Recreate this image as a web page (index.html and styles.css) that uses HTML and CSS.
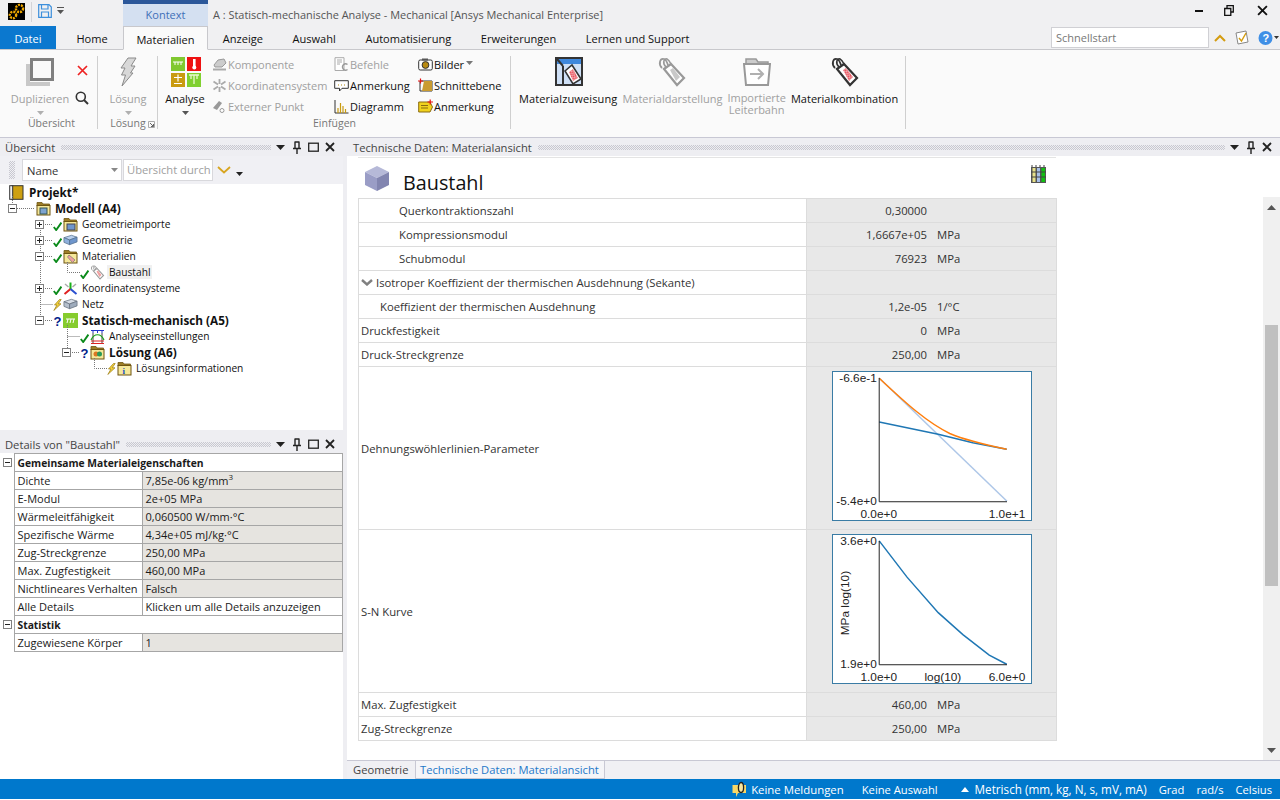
FILE: index.html
```html
<!DOCTYPE html>
<html lang="de">
<head>
<meta charset="utf-8">
<title>A : Statisch-mechanische Analyse - Mechanical</title>
<link rel="stylesheet" href="styles.css">
</head>
<body>
<svg class="defs" width="0" height="0" aria-hidden="true">
  <defs>
    <pattern id="chk" width="3" height="3" patternUnits="userSpaceOnUse" patternTransform="rotate(35)"><rect width="3" height="3" fill="#f4c0c4"/><rect width="1.5" height="1.5" fill="#e8404c"/><rect x="1.5" y="1.5" width="1.5" height="1.5" fill="#e8404c"/></pattern>
    <symbol id="check" viewBox="0 0 9 10"><path d="M0.8 6 L3.2 9 L8.4 1.6" fill="none" stroke="#0a8a1a" stroke-width="1.9"/></symbol>
    <symbol id="bolt" viewBox="0 0 9 12"><path d="M6.5 0.5 L1.5 6 L4 6 L0.8 11.5 L8 4.8 L5.2 4.8 L8.2 0.5Z" fill="#f3d23c" stroke="#9a7a10" stroke-width=".7"/></symbol>
    <symbol id="quest" viewBox="0 0 9 13"><text x="0.5" y="12" class="q">?</text></symbol>
    <symbol id="folder" viewBox="0 0 15 15"><path d="M1 3.5 V1.5 H6 L7 3 H13.5 V5 H1Z" fill="#9d7d27" stroke="#6f5510" stroke-width=".8"/><rect x="1" y="4.5" width="13" height="9.5" fill="#f6e89a" stroke="#6f5510"/></symbol>
    <symbol id="cube" viewBox="0 0 16 12"><path d="M1 3.5 L9 1 L15 3 L7 6Z" fill="#b9d0ee" stroke="#56708e" stroke-width=".8"/><path d="M1 3.5 L7 6 V11 L1 8.5Z" fill="#8fb1dc" stroke="#56708e" stroke-width=".8"/><path d="M7 6 L15 3 V8 L7 11Z" fill="#6f96cc" stroke="#56708e" stroke-width=".8"/></symbol>
    <symbol id="cubegray" viewBox="0 0 16 12"><path d="M1 3.5 L9 1 L15 3 L7 6Z" fill="#d7dde6" stroke="#66707e" stroke-width=".8"/><path d="M1 3.5 L7 6 V11 L1 8.5Z" fill="#b5bfcc" stroke="#66707e" stroke-width=".8"/><path d="M7 6 L15 3 V8 L7 11Z" fill="#9eabbc" stroke="#66707e" stroke-width=".8"/></symbol>
    <symbol id="tag" viewBox="0 0 30 30"><path d="M5 11 C1 7 3 1 7 2 C9 2.500 10 5 11 8" fill="none" stroke="currentColor" stroke-width="1.8"/><path d="M9 10 C5 6 7 1 10 2 C12 3 13 5 14 7" fill="none" stroke="currentColor" stroke-width="1.6"/><path d="M7 12 L14 7 L27 21 L20 28Z" fill="#fff" stroke="currentColor" stroke-width="2.2"/></symbol>
    <symbol id="tri" viewBox="0 0 9 5"><path d="M0 0 H9 L4.5 5Z" fill="currentColor"/></symbol>
    <symbol id="pin" viewBox="0 0 10 13"><path d="M2.5 1 H7.5 M3 1 V7 M7 1 V7 M1 7.5 H9 M5 8 V13" fill="none" stroke="#222" stroke-width="1.4"/></symbol>
    <symbol id="close" viewBox="0 0 10 10"><path d="M1 1 L9 9 M9 1 L1 9" stroke="#222" stroke-width="1.8"/></symbol>
    <symbol id="maxi" viewBox="0 0 11 10"><rect x=".7" y="1.2" width="9.6" height="8" fill="none" stroke="#222" stroke-width="1.3"/></symbol>
  </defs>
</svg>

<div class="app">
  <header class="titlebar">
    <div class="logo">
      <svg width="17" height="17" viewBox="0 0 17 17"><circle cx="11.5" cy="5.5" r="3.6" fill="none" stroke="#f0a800" stroke-width="2.4" stroke-dasharray="2 1"/><circle cx="5" cy="12" r="3.2" fill="none" stroke="#f0a800" stroke-width="2.4" stroke-dasharray="2 1"/></svg>
    </div>
    <div class="qat">
      <svg width="14" height="14" viewBox="0 0 14 14"><path d="M.7.7 H11 L13.3 3 V13.3 H.7Z M3.5 .7 V5 H10 V.7 M3.5 13.3 V8 H10.5 V13.3" fill="none" stroke="#3d8fdc" stroke-width="1.2"/></svg>
      <svg class="qat-tri" width="7" height="8" viewBox="0 0 7 8"><path d="M0 0 H7 V1 H0Z M0 3 H7 L3.5 7Z" fill="#555"/></svg>
    </div>
    <div class="context-tab">Kontext</div>
    <div class="window-title">A : Statisch-mechanische Analyse - Mechanical [Ansys Mechanical Enterprise]</div>
    <div class="winbtns">
      <svg width="8" height="3" viewBox="0 0 8 3"><rect width="8" height="2" y="1" fill="#111"/></svg>
      <svg class="restore" width="10" height="11" viewBox="0 0 10 11"><path d="M3 3 V.7 H9.3 V7 H7 M.7 3.5 H6.8 V10.3 H.7Z" fill="none" stroke="#111" stroke-width="1.3"/></svg>
      <svg width="11" height="11" viewBox="0 0 10 10"><path d="M1 1 L9 9 M9 1 L1 9" stroke="#111" stroke-width="1.7"/></svg>
    </div>
  </header>

  <nav class="tabbar">
    <div class="tab file">Datei</div>
    <div class="tab home">Home</div>
    <div class="tab active">Materialien</div>
    <div class="tab">Anzeige</div>
    <div class="tab">Auswahl</div>
    <div class="tab">Automatisierung</div>
    <div class="tab">Erweiterungen</div>
    <div class="tab">Lernen und Support</div>
    <div class="quick">
      <div class="quick-input">Schnellstart</div>
      <svg width="12" height="8" viewBox="0 0 12 8"><path d="M1 7 L6 2 L11 7" fill="none" stroke="#d49c10" stroke-width="2"/></svg>
      <svg width="14" height="15" viewBox="0 0 14 15"><path d="M1 3 L11 1 L13 12 L3 14Z" fill="#fff" stroke="#888"/><path d="M4 8 L6.5 11 L11 3" fill="none" stroke="#d49c10" stroke-width="1.4"/></svg>
      <span class="help"><svg width="15" height="16" viewBox="0 0 15 16"><circle cx="7.5" cy="8" r="7" fill="#3f8fe6"/><text x="4.4" y="12.2" class="helpq">?</text></svg><svg class="tri-s" width="5" height="3"><use href="#tri"/></svg></span>
    </div>
  </nav>

  <section class="ribbon">
    <div class="group g-overview">
      <div class="group-body">
        <div class="bigbtn off w64">
          <span class="bigicon"><svg width="30" height="30" viewBox="0 0 30 30"><path d="M1 7 V29 H25 V25 H5 V7Z" fill="#c8c8c8"/><rect x="6.5" y="2.5" width="21" height="20" fill="#fafafa" stroke="#808080" stroke-width="3"/></svg></span>
          <span class="biglabel">Duplizieren</span>
          <svg class="droptri" width="7" height="4"><use href="#tri"/></svg>
        </div>
        <div class="stack-icons">
          <svg width="11" height="11" viewBox="0 0 11 11"><path d="M1 1 L10 10 M10 1 L1 10" stroke="#ee2222" stroke-width="1.7"/></svg>
          <svg width="14" height="14" viewBox="0 0 14 14"><circle cx="5.8" cy="5.8" r="4.5" fill="none" stroke="#333" stroke-width="1.6"/><path d="M9 9 L13 13" stroke="#333" stroke-width="2"/></svg>
        </div>
      </div>
      <div class="group-label">Übersicht</div>
    </div>

    <div class="group g-solve">
      <div class="group-body">
        <div class="bigbtn off full">
          <span class="bigicon"><svg width="19" height="30" viewBox="0 0 19 30"><path d="M9 1 H17 L12 9 L16 9 L11.5 16 L14 16 L3 29 L6.5 18 L2.5 18 L6 11 L2 11Z" fill="#d8d8d8" stroke="#8a8a8a"/></svg></span>
          <span class="biglabel">Lösung</span>
          <svg class="droptri" width="7" height="4"><use href="#tri"/></svg>
        </div>
      </div>
      <div class="group-label">Lösung<svg class="launcher" width="7" height="7" viewBox="0 0 7 7"><path d="M.5 .5 H6.5 V6.5 H.5Z" fill="none" stroke="#aaa"/><path d="M2 2 L5.5 5.5 M5.5 3 V5.5 H3" stroke="#666" fill="none"/></svg></div>
    </div>

    <div class="group g-insert">
      <div class="group-body">
        <div class="bigbtn w54">
          <span class="bigicon tiles">
            <svg width="30" height="30" viewBox="0 0 30 30">
              <rect width="14" height="14" fill="#80c830"/><path d="M2 5 H12 M4 5 V8 M7 5 V8 M10 5 V8" stroke="#fff"/>
              <rect x="16" width="14" height="14" fill="#ee1111"/><rect x="22" y="2" width="2.6" height="8" fill="#fff"/><circle cx="23.3" cy="10.500" r="2" fill="#fff"/>
              <rect y="16" width="14" height="14" fill="#c99b10"/><path d="M3 21 H11 M7 18 V25 M3 27 H11" stroke="#fff" stroke-width="1.2" transform="translate(0 -.5)"/>
              <rect x="16" y="16" width="14" height="14" fill="#80d030"/><path d="M18 18 H28 M23 18 V27 M20 18 V22 M26 18 V22" stroke="#eaf7d0" stroke-width="1.3"/>
            </svg>
          </span>
          <span class="biglabel">Analyse</span>
          <svg class="droptri dark" width="7" height="4"><use href="#tri"/></svg>
        </div>
        <div class="smallcol c1">
          <div class="small off"><svg width="15" height="15" viewBox="0 0 15 15"><path d="M2 8 L6 3 L12 2 L14 6 L10 10 H3Z" fill="#ccc" stroke="#999"/><path d="M1 12.5 H14" stroke="#aaa" stroke-width="2"/></svg>Komponente</div>
          <div class="small off"><svg width="15" height="15" viewBox="0 0 15 15"><path d="M7.5 1 V6 M7.5 9 V14 M1.5 3.5 L6 6.500 M9 8.5 L13.5 11.5 M13.5 3.5 L9 6.5 M6 8.5 L1.5 11.5" stroke="#aaa" stroke-width="1.8"/></svg>Koordinatensystem</div>
          <div class="small off"><svg width="15" height="15" viewBox="0 0 15 15"><path d="M1 9 L7 2 L10 4 L5 11Z" fill="#999"/><circle cx="10" cy="11.5" r="2" fill="#fff" stroke="#999"/></svg>Externer Punkt</div>
        </div>
        <div class="smallcol c2">
          <div class="small off"><svg width="15" height="15" viewBox="0 0 15 15"><path d="M1 .7 H10 V13.5 H1Z" fill="#fff" stroke="#aaa"/><path d="M3 3 H8 M3 5 H8 M3 7 H6" stroke="#aaa"/><path d="M13.5 7.5 A3 3.2 0 1 0 13.5 12.5" fill="none" stroke="#999" stroke-width="1.4"/></svg>Befehle</div>
          <div class="small"><svg width="15" height="15" viewBox="0 0 15 15"><path d="M.7 2.7 H14.3 V10.3 H8 L5.5 13 V10.3 H.7Z" fill="#fff" stroke="#333"/><path d="M4 7 H5 M7 7 H8 M10 7 H11" stroke="#b08a10"/></svg>Anmerkung</div>
          <div class="small"><svg width="15" height="15" viewBox="0 0 15 15"><path d="M1 1 V14 H14.5" fill="none" stroke="#333"/><path d="M4 14 V9 M6.5 14 V4 M9 14 V7 M11.5 14 V10" stroke="#c99b10" stroke-width="1.2"/></svg>Diagramm</div>
        </div>
        <div class="smallcol c3">
          <div class="small"><svg width="15" height="15" viewBox="0 0 15 15"><rect x=".7" y="3" width="13.6" height="10" rx="1.5" fill="#fff" stroke="#333"/><rect x="4" y="1.5" width="6" height="2" fill="#555"/><circle cx="7.5" cy="8" r="3.4" fill="#b88a10" stroke="#333"/></svg>Bilder<svg class="tri-i" width="7" height="4"><use href="#tri"/></svg></div>
          <div class="small"><svg width="15" height="15" viewBox="0 0 15 15"><path d="M2 3 H14 V13 H2Z" fill="none" stroke="#333"/><path d="M6 3 H14 V13 H4Z" fill="#c99b30"/><path d="M0 3 H5 M2.5 .5 V5.5" stroke="#e81010" stroke-width="1.2"/></svg>Schnittebene</div>
          <div class="small"><svg width="15" height="15" viewBox="0 0 15 15"><path d="M.7 3 H12 L14.5 8 L12 13 H.7Z" fill="#f1d21d" stroke="#8a6c10"/><path d="M3 6.5 H10 M3 9 H10" stroke="#8a6c10"/><path d="M9.5 3 H15 M12.2 .5 V5.5" stroke="#e81010" stroke-width="1.2"/></svg>Anmerkung</div>
        </div>
      </div>
      <div class="group-label">Einfügen</div>
    </div>

    <div class="group g-material">
      <div class="group-body">
        <div class="bigbtn first">
          <span class="bigicon"><svg width="28" height="29" viewBox="0 0 28 29"><path d="M1 1 H27 V28 H1Z" fill="#cfe0f6" stroke="#333" stroke-width="2"/><path d="M2 2 H26 V7 H2Z" fill="#3f88dc"/><path d="M8 9 V28 M8 9 L2 2" stroke="#333" stroke-width="2"/><path d="M10 14 L17 8 L26 22 L18 27Z" fill="#fff" stroke="#333" stroke-width="1.6"/><path d="M14 15 L18 12 L23 21 L18 24Z" fill="url(#chk)"/></svg></span>
          <span class="biglabel">Materialzuweisung</span>
        </div>
        <div class="bigbtn off">
          <span class="bigicon gray"><svg width="30" height="30" viewBox="0 0 30 30"><use href="#tag"/><path d="M13 13 L16 11 L23 20 L19 24Z" fill="#c8c8c8"/></svg></span>
          <span class="biglabel">Materialdarstellung</span>
        </div>
        <div class="bigbtn off">
          <span class="bigicon"><svg width="28" height="29" viewBox="0 0 28 29"><path d="M3 7 V2 H13 L15 5 H25 V7" fill="#ccc" stroke="#999" stroke-width="1.5"/><path d="M1 7 H27 L25 28 H3Z" fill="#fff" stroke="#999" stroke-width="2"/><path d="M7 17 H19 M15 12 L20 17 L15 22" fill="none" stroke="#b0b0b0" stroke-width="2"/></svg></span>
          <span class="biglabel two">Importierte<br>Leiterbahn</span>
        </div>
        <div class="bigbtn">
          <span class="bigicon dark"><svg width="30" height="30" viewBox="0 0 30 30"><use href="#tag"/><path d="M13 13 L16 11 L23 20 L19 24Z" fill="url(#chk)"/></svg></span>
          <span class="biglabel">Materialkombination</span>
        </div>
      </div>
    </div>
  </section>

  <main class="workspace">
    <aside class="left">
      <section class="pane-tree">
        <div class="panehead">
          <span class="panetitle">Übersicht</span>
          <span class="grip"></span>
          <span class="paneicons">
            <svg class="i-tri" width="9" height="5"><use href="#tri"/></svg>
            <svg width="10" height="13"><use href="#pin"/></svg>
            <svg width="11" height="10"><use href="#maxi"/></svg>
            <svg width="10" height="10"><use href="#close"/></svg>
          </span>
        </div>
        <div class="treetools">
          <span class="vgrip"></span>
          <div class="select">Name<svg width="7" height="4"><use href="#tri"/></svg></div>
          <div class="search">Übersicht durch</div>
          <svg class="chev" width="14" height="8" viewBox="0 0 14 8"><path d="M1 1 L7 6.5 L13 1" fill="none" stroke="#d8a520" stroke-width="1.8"/></svg>
          <svg class="chev2" width="7" height="4"><use href="#tri"/></svg>
        </div>
        <div class="tree">
          <svg class="connectors" width="343" height="200" viewBox="0 0 343 200">
            <path d="M12.5 12 V20 M17 24.5 H34 M40.5 44 V136 M45 40.5 H53 M45 56.5 H53 M45 72.5 H53 M45 104.5 H53 M40.5 120.5 H53 M45 136.5 H53 M67.5 78 V88.5 H80 M67.5 141 V164 M67.5 152.5 H80 M72 168.5 H80 M94.5 174 V184.5 H107" fill="none" stroke="#777" stroke-dasharray="1 1"/>
          </svg>
          <div class="node root"><svg class="icon" width="15" height="15" viewBox="0 0 15 15"><rect x="3" y=".7" width="11" height="13.6" fill="#cda012" stroke="#333"/><rect x=".7" y=".7" width="3" height="13.6" fill="#eee" stroke="#333"/></svg><b>Projekt*</b></div>
          <div class="node l1"><i class="box minus"></i><i class="st"></i><svg class="icon" width="15" height="15" viewBox="0 0 15 15"><use href="#folder"/><rect x="4" y="7" width="7" height="6" fill="#7da3cf" stroke="#355"/></svg><b>Modell (A4)</b></div>
          <div class="node l2"><i class="box plus"></i><i class="st"><svg width="9" height="10"><use href="#check"/></svg></i><svg class="icon" width="15" height="15" viewBox="0 0 15 15"><use href="#folder"/><rect x="4" y="7" width="8" height="6" fill="#6f96cc" stroke="#445"/></svg><span>Geometrieimporte</span></div>
          <div class="node l2"><i class="box plus"></i><i class="st"><svg width="9" height="10"><use href="#check"/></svg></i><svg class="icon" width="15" height="12"><use href="#cube"/></svg><span>Geometrie</span></div>
          <div class="node l2"><i class="box minus"></i><i class="st"><svg width="9" height="10"><use href="#check"/></svg></i><svg class="icon" width="15" height="15" viewBox="0 0 15 15"><use href="#folder"/><path d="M6 6 L12 11 L9.5 13.5 L4.5 8Z" fill="#f0a0a0" stroke="#777" stroke-width=".7"/></svg><span>Materialien</span></div>
          <div class="node l3"><i class="box none"></i><i class="st"><svg width="9" height="10"><use href="#check"/></svg></i><svg class="icon gray" width="15" height="15" viewBox="0 0 30 30"><use href="#tag"/><path d="M13 13 L16 11 L23 20 L19 24Z" fill="#f0a0a0"/></svg><span class="selected">Baustahl</span></div>
          <div class="node l2"><i class="box plus"></i><i class="st"><svg width="9" height="10"><use href="#check"/></svg></i><svg class="icon" width="15" height="15" viewBox="0 0 15 15"><path d="M7.5 8 V1.5" stroke="#18b018" stroke-width="2"/><path d="M7.5 8 L1.5 13" stroke="#e02020" stroke-width="2"/><path d="M7.5 8 L13.5 13" stroke="#2a50d0" stroke-width="2"/><path d="M2 3 L5.5 6 M13 3 L9.5 6" stroke="#aaa" stroke-width="1.5"/></svg><span>Koordinatensysteme</span></div>
          <div class="node l2"><i class="box none"></i><i class="st"><svg width="9" height="12"><use href="#bolt"/></svg></i><svg class="icon" width="15" height="12"><use href="#cubegray"/></svg><span>Netz</span></div>
          <div class="node l2"><i class="box minus"></i><i class="st"><svg width="9" height="13"><use href="#quest"/></svg></i><svg class="icon" width="15" height="15" viewBox="0 0 15 15"><rect width="15" height="15" fill="#86cc2e"/><path d="M3 6 H12 M5 6 L4 10 M8 6 L7 10 M11 6 L10 10" stroke="#fff"/></svg><b>Statisch-mechanisch (A5)</b></div>
          <div class="node l3"><i class="box none"></i><i class="st"><svg width="9" height="10"><use href="#check"/></svg></i><svg class="icon" width="15" height="15" viewBox="0 0 15 15"><path d="M1 1.5 H14 M3 1 V4 M7.5 1 V4 M12 1 V4" stroke="#2233cc"/><path d="M3 4 V14 M12 4 V14" stroke="#444"/><path d="M1 12 H14 M1 14.5 H14" stroke="#dd2222"/><path d="M1 11 C4 4 11 4 14 11" fill="none" stroke="#14a014" stroke-width="1.2"/></svg><span>Analyseeinstellungen</span></div>
          <div class="node l3 kid"><i class="box minus"></i><i class="st"><svg width="9" height="13"><use href="#quest"/></svg></i><svg class="icon" width="15" height="15" viewBox="0 0 15 15"><use href="#folder"/><circle cx="6" cy="9" r="2.5" fill="#dd7722"/><circle cx="9.5" cy="9" r="2.5" fill="#2a9a5a"/></svg><b>Lösung (A6)</b></div>
          <div class="node l4"><i class="box none"></i><i class="st"><svg width="9" height="12"><use href="#bolt"/></svg></i><svg class="icon" width="15" height="15" viewBox="0 0 15 15"><use href="#folder"/><text x="5.5" y="12.5" class="info">i</text></svg><span>Lösungsinformationen</span></div>
        </div>
      </section>

      <section class="pane-details">
        <div class="panehead">
          <span class="panetitle">Details von "Baustahl"</span>
          <span class="grip"></span>
          <span class="paneicons">
            <svg class="i-tri" width="9" height="5"><use href="#tri"/></svg>
            <svg width="10" height="13"><use href="#pin"/></svg>
            <svg width="11" height="10"><use href="#maxi"/></svg>
            <svg width="10" height="10"><use href="#close"/></svg>
          </span>
        </div>
        <table class="details">
          <colgroup><col class="c-exp"><col class="c-name"><col class="c-val"></colgroup>
          <tr class="cat"><td class="exp"><i class="box minus"></i></td><td colspan="2">Gemeinsame Materialeigenschaften</td></tr>
          <tr><td class="exp"></td><td>Dichte</td><td class="v">7,85e-06 kg/mm<sup>3</sup></td></tr>
          <tr><td class="exp"></td><td>E-Modul</td><td class="v">2e+05 MPa</td></tr>
          <tr><td class="exp"></td><td>Wärmeleitfähigkeit</td><td class="v">0,060500 W/mm·°C</td></tr>
          <tr><td class="exp"></td><td>Spezifische Wärme</td><td class="v">4,34e+05 mJ/kg·°C</td></tr>
          <tr><td class="exp"></td><td>Zug-Streckgrenze</td><td class="v">250,00 MPa</td></tr>
          <tr><td class="exp"></td><td>Max. Zugfestigkeit</td><td class="v">460,00 MPa</td></tr>
          <tr><td class="exp"></td><td>Nichtlineares Verhalten</td><td class="v">Falsch</td></tr>
          <tr><td class="exp"></td><td>Alle Details</td><td>Klicken um alle Details anzuzeigen</td></tr>
          <tr class="cat"><td class="exp"><i class="box minus"></i></td><td colspan="2">Statistik</td></tr>
          <tr><td class="exp"></td><td>Zugewiesene Körper</td><td class="v">1</td></tr>
        </table>
      </section>
    </aside>

    <section class="right">
      <div class="panehead">
        <span class="panetitle">Technische Daten: Materialansicht</span>
        <span class="grip"></span>
        <span class="paneicons gapped">
          <svg class="i-tri" width="9" height="5"><use href="#tri"/></svg>
          <svg width="10" height="13"><use href="#pin"/></svg>
          <svg width="10" height="10"><use href="#close"/></svg>
        </span>
      </div>
      <div class="viewer">
        <div class="content">
          <div class="mat-head">
            <svg class="mat-cube" width="26" height="27" viewBox="0 0 26 27"><path d="M13 1 L25 7 L13 13 L1 7Z" fill="#b6b9d8"/><path d="M1 7 L13 13 V26 L1 20Z" fill="#9a9dc6"/><path d="M25 7 L13 13 V26 L25 20Z" fill="#8285b0"/></svg>
            <h1>Baustahl</h1>
            <svg class="mat-book" width="16" height="18" viewBox="0 0 16 18"><rect x="0" y="2" width="15" height="16" fill="#555"/><rect x="1.5" y="3" width="3" height="14" fill="#e8e28a"/><rect x="6" y="3" width="3" height="14" fill="#a8c0e8"/><rect x="10.5" y="3" width="3.5" height="14" fill="#10c010"/><path d="M0 7 H15 M0 12 H15" stroke="#444"/><path d="M1 2 V0 M5 2 V0 M9 2 V0 M13 2 V0" stroke="#777" stroke-width="1.4"/></svg>
          </div>
          <table class="props">
            <colgroup><col class="p-name"><col class="p-val"></colgroup>
            <tr><td class="ind2">Querkontraktionszahl</td><td class="pv"><span class="n">0,30000</span></td></tr>
            <tr><td class="ind2">Kompressionsmodul</td><td class="pv"><span class="n">1,6667e+05</span><span class="u">MPa</span></td></tr>
            <tr><td class="ind2">Schubmodul</td><td class="pv"><span class="n">76923</span><span class="u">MPa</span></td></tr>
            <tr><td class="expand"><svg width="12" height="7" viewBox="0 0 12 7"><path d="M1 1 L6 5.5 L11 1" fill="none" stroke="#808080" stroke-width="2.4"/></svg>Isotroper Koeffizient der thermischen Ausdehnung (Sekante)</td><td class="pv"></td></tr>
            <tr><td class="ind1">Koeffizient der thermischen Ausdehnung</td><td class="pv"><span class="n">1,2e-05</span><span class="u">1/°C</span></td></tr>
            <tr><td>Druckfestigkeit</td><td class="pv"><span class="n">0</span><span class="u">MPa</span></td></tr>
            <tr><td>Druck-Streckgrenze</td><td class="pv"><span class="n">250,00</span><span class="u">MPa</span></td></tr>
            <tr class="chart-row"><td>Dehnungswöhlerlinien-Parameter</td><td class="pv chart-cell">
              <svg class="chart" width="200" height="150" viewBox="0 0 200 150">
                <path d="M46.5 6 L176 131" class="c-light"/>
                <path d="M46.5 50.7 L106.3 63 L141.3 71.7 L175.7 78.3" class="c-blue"/>
                <path d="M46.5 6.3 C75 33 95 51 118 62.3 C135 69.500 155 74 175.7 78.3" class="c-orange"/>
                <path d="M46.5 6 V131.5 H176" class="c-axis"/>
                <text x="44" y="10" class="end">-6.6e-1</text>
                <text x="44" y="135" class="end">-5.4e+0</text>
                <text x="46" y="148" class="mid">0.0e+0</text>
                <text x="176" y="148" class="mid">1.0e+1</text>
              </svg></td></tr>
            <tr class="chart-row"><td>S-N Kurve</td><td class="pv chart-cell">
              <svg class="chart" width="200" height="150" viewBox="0 0 200 150">
                <path d="M46.5 6 L74.7 42.7 L106.3 78.7 L131.3 101 L158 121.7 L175.7 131" class="c-blue"/>
                <path d="M46.5 6 V131.5 H176" class="c-axis"/>
                <text x="44" y="10" class="end">3.6e+0</text>
                <text x="44" y="135" class="end">1.9e+0</text>
                <text x="46" y="148" class="mid">1.0e+0</text>
                <text x="111" y="148" class="mid">log(10)</text>
                <text x="176" y="148" class="mid">6.0e+0</text>
                <text x="0" y="0" class="mid" transform="translate(16 69) rotate(-90)">MPa log(10)</text>
              </svg></td></tr>
            <tr><td>Max. Zugfestigkeit</td><td class="pv"><span class="n">460,00</span><span class="u">MPa</span></td></tr>
            <tr><td>Zug-Streckgrenze</td><td class="pv"><span class="n">250,00</span><span class="u">MPa</span></td></tr>
          </table>
        </div>
        <div class="scrollbar">
          <svg class="arrow" width="9" height="5" viewBox="0 0 9 5"><path d="M0 5 H9 L4.5 0Z" fill="#555"/></svg>
          <div class="track"><div class="thumb"></div></div>
          <svg class="arrow" width="9" height="5"><use href="#tri"/></svg>
        </div>
      </div>
      <div class="doc-tabs">
        <div class="doc-tab">Geometrie</div>
        <div class="doc-tab current">Technische Daten: Materialansicht</div>
      </div>
    </section>
  </main>

  <footer class="status">
    <span class="st-msg"><svg width="17" height="17" viewBox="0 0 17 17"><path d="M.5 4 H14 V12 H6 L4 16 V12 H.5Z" fill="#f8d868"/><ellipse cx="9" cy="6.5" rx="2.6" ry="5" fill="#f8e8a0" stroke="#222" stroke-width="1.3"/></svg>Keine Meldungen</span>
    <span class="st-sel">Keine Auswahl</span>
    <span class="st-unit"><svg width="8" height="5" viewBox="0 0 8 5"><path d="M0 5 H8 L4 0Z" fill="#fff"/></svg><span class="unit-text">Metrisch (mm, kg, N, s, mV, mA)</span></span>
    <span>Grad</span>
    <span>rad/s</span>
    <span>Celsius</span>
  </footer>
</div>
</body>
</html>
```

FILE: styles.css
```css
* { box-sizing: border-box; }
html, body { margin: 0; padding: 0; height: 100%; background: #fff; overflow: hidden; }
body { font-family: "Open Sans", "Noto Sans", sans-serif; font-size: 11px; color: #1a1a1a; }
.defs { position: absolute; }
.q { font: bold 13px "Liberation Sans", sans-serif; fill: #00208a; }
.helpq { font: bold 11px "Liberation Sans", sans-serif; fill: #fff; }
.info { font: bold 9px "Liberation Serif", serif; fill: #2050c0; }
svg { display: block; flex: none; }
i { font-style: normal; }

.app { width: 1280px; height: 799px; display: flex; flex-direction: column; }

/* Title bar */
.titlebar { height: 26px; flex: none; display: flex; background: #f0f0f2; }
.logo { width: 26px; height: 26px; background: #f0f0f2; display: flex; align-items: flex-start; justify-content: flex-start; padding: 3px 0 0 8px; }
.logo svg { background: #000; }
.qat { width: 97px; display: flex; align-items: flex-start; padding: 4px 0 0 12px; gap: 5px; position: relative; }
.qat::before { content: ""; position: absolute; left: 5px; top: 2px; height: 20px; width: 1px; background: #d4d4d8; }
.qat-tri { margin-top: 3px; }
.context-tab { width: 85px; background: #d4e0f1; border-top: 4px solid #2b579a; text-align: center; color: #3f6fb8; font-size: 11px; line-height: 22px; }
.window-title { margin-left: 5px; font-size: 10.95px; line-height: 30px; color: #555; flex: 1; white-space: nowrap; }
.winbtns { width: 86px; display: flex; gap: 21px; align-items: center; padding: 0 0 6px 1px; }
.restore { margin-right: 2px; }

/* Tabs */
.tabbar { height: 24px; flex: none; display: flex; background: #f0f0f2; border-bottom: 1px solid #c8c8cc; }
.tab { padding: 0 14.8px; font-size: 11.05px; line-height: 25px; color: #111; white-space: nowrap; }
.tab.file { width: 56px; padding: 0; background: #0b78cf; color: #fff; text-align: center; }
.tab.home { width: 67px; padding: 0 0 0 5px; text-align: center; }
.tab.active { width: 85px; padding: 0; text-align: center; background: #fafafa; border: 1px solid #c8c8cc; border-bottom: 1px solid #fafafa; height: 24px; }
.quick { margin-left: auto; display: flex; align-items: center; height: 23px; padding-right: 1px; gap: 9px; }
.quick-input { width: 158px; height: 21px; margin-right: -4px; background: #fff; border: 1px solid #d0d0d4; padding-left: 4px; color: #777; font-size: 11px; line-height: 20px; }
.help { display: flex; align-items: center; gap: 1px; }
.tri-s { color: #333; width: 5px; height: 3px; }

/* Ribbon */
.ribbon { height: 87px; flex: none; display: flex; background: #fafafa; align-items: flex-start; }
.group { height: 80px; display: flex; flex-direction: column; position: relative; }
.group::after { content: ""; position: absolute; right: 0; top: 6px; height: 73px; width: 1px; background: #cfcfcf; }
.group-body { display: flex; height: 66px; padding-top: 5px; }
.group-label { text-align: center; color: #777; font-size: 10.5px; line-height: 14px; }
.g-overview { width: 98px; }
.g-overview .group-label { padding-left: 5px; }
.g-overview .group-body { padding-left: 8px; }
.g-solve { width: 60px; }
.g-solve .group-label { position: relative; }
.launcher { position: absolute; right: 3px; top: 5px; }
.g-insert { width: 353px; }
.g-material { width: 395px; }
.g-material .group-body { padding-left: 8px; gap: 5px; }
.first .biglabel { letter-spacing: .12px; }
.first .bigicon { padding-left: 2px; }

.bigbtn { display: flex; flex-direction: column; align-items: center; color: #111; white-space: nowrap; }
.bigbtn.off { color: #a0a0a0; }
.w64 { width: 64px; }
.w54 { width: 54px; }
.full { width: 100%; }
.bigicon { height: 36px; display: flex; align-items: flex-start; justify-content: center; padding-top: 2px; }
.tiles { padding-left: 2px; }
.biglabel { font-size: 11px; line-height: 15px; height: 16px; text-align: center; }
.biglabel.two { line-height: 12px; margin-top: 1px; color: #a0a0a0; }
.droptri { margin-top: 4px; color: #b0b0b0; }
.droptri.dark { color: #555; }
.gray { color: #999; }
.dark { color: #333; }
.stack-icons { width: 20px; display: flex; flex-direction: column; align-items: center; gap: 15px; padding-top: 10px; }
.smallcol { display: flex; flex-direction: column; margin-top: -1px; }
.c1 { width: 122px; letter-spacing: -.04px; }
.c2 { width: 84px; }
.small { height: 21px; flex: none; display: flex; align-items: center; gap: 1px; white-space: nowrap; font-size: 11px; color: #111; }
.small.off { color: #a0a0a0; }
.tri-i { margin-left: 1px; margin-top: -3px; color: #777; }

/* Workspace */
.workspace { height: 642px; flex: none; display: flex; gap: 4px; background: #eeeef2; border-top: 1px solid #c8c8d4; }
.left { width: 343px; flex: none; display: flex; flex-direction: column; background: #fff; }
.pane-tree { height: 297px; flex: none; background: #eeeef2; }
.pane-details { flex: 1; background: #fff; }
.panehead { height: 18px; display: flex; align-items: center; background: #eeeef2; padding-left: 5px; color: #444; font-size: 11.2px; white-space: nowrap; }
.grip { flex: 1; height: 5px; margin: 0 5px 0 6px; background: conic-gradient(#c8c8d0 25%, transparent 0 50%, #c8c8d0 0 75%, transparent 0) 0 0 / 2px 2px; }
.paneicons { display: flex; align-items: center; gap: 6px; padding-right: 8px; }
.i-tri { color: #222; }
.paneicons svg:nth-child(1) { margin-right: 1px; }
.treetools { height: 28px; display: flex; align-items: center; background: #f0f0f4; padding-left: 9px; }
.vgrip { width: 6px; height: 18px; margin-right: 7px; background: conic-gradient(#c8c8d0 25%, transparent 0 50%, #c8c8d0 0 75%, transparent 0) 0 0 / 2px 2px; }
.select { width: 100px; height: 22px; display: flex; align-items: center; justify-content: space-between; padding: 0 3px 0 4px; background: #fff; border: 1px solid #d8d8dc; font-size: 11.2px; color: #333; }
.select svg { color: #888; }
.search { width: 90px; height: 22px; margin-left: 1px; line-height: 20px; padding-left: 3px; background: #fff; border: 1px solid #d8d8dc; color: #a0a0a0; font-size: 11.2px; overflow: hidden; white-space: nowrap; }
.chev { margin-left: 4px; }
.chev2 { margin: 8px 0 0 5px; color: #222; }

.tree { position: relative; height: 246px; background: #fff; }
.connectors { position: absolute; left: 0; top: 0; pointer-events: none; }
.node { height: 16px; display: flex; align-items: center; white-space: nowrap; font-size: 10.2px; color: #111; }
.node b { font-size: 11.75px; }
.node.root { padding-left: 9px; }
.node.root .icon { margin-right: 5px; }
.l1 { padding-left: 8px; }
.l2 { padding-left: 35px; }
.l3 { padding-left: 62px; }
.l4 { padding-left: 89px; }
.box { width: 9px; height: 9px; flex: none; margin-right: 9px; border: 1px solid #808080; background: #fff; position: relative; display: block; }
.box.none { border: 0; background: none; }
.box.minus::before, .box.plus::before { content: ""; position: absolute; left: 1px; top: 3px; width: 5px; height: 1px; background: #222; }
.box.plus::after { content: ""; position: absolute; left: 3px; top: 1px; width: 1px; height: 5px; background: #222; }
.st { width: 10px; flex: none; display: flex; align-items: flex-end; height: 14px; }
.icon { width: 15px; margin-right: 4px; }
.selected { background: #f0f0f0; padding: 0 2px; margin-left: -2px; }

.details { border-collapse: collapse; table-layout: fixed; width: 342px; font-size: 11px; }
.c-exp { width: 14px; }
.c-name { width: 128px; }
.c-val { width: 200px; }
.details td { height: 18px; padding: 0 3px; border: 1px solid #a6a6a6; white-space: nowrap; line-height: 16px; color: #1a1a1a; overflow: hidden; }
.details td.exp { border: 0; padding: 0 0 0 3px; background: #fff; }
.details .cat td { font-weight: 700; font-size: 10.3px; }
.details .cat td.exp { background: #fff; border: 0; }
.details .box { margin: 0; background: #fff; }
.details td.v { background: #e6e4e0; }
.details sup { font-size: 8px; line-height: 0; }

/* Right */
.right { flex: 1; min-width: 0; display: flex; flex-direction: column; background: #eeeef2; }
.right .panehead { margin-left: -4px; padding-left: 10px; }
.viewer { height: 604px; flex: none; display: flex; background: #fff; }
.content { flex: 1; padding: 1px 0 0 11px; min-width: 0; }
.mat-head { width: 698px; height: 41px; border-top: 1px solid #e4e4e4; display: flex; align-items: center; padding-left: 6px; }
.mat-cube { margin-top: 1px; }
.mat-head h1 { margin: 10px 0 0 13px; font-size: 19.8px; font-weight: 400; color: #111; flex: 1; line-height: 28px; }
.mat-book { margin: -8px 9px 0 0; }
.props { border-collapse: collapse; table-layout: fixed; width: 698px; font-size: 11.3px; color: #333; }
.p-name { width: 448px; }
.p-val { width: 250px; }
.props td { height: 24px; border: 1px solid #dcdcdc; padding: 0 0 0 2px; white-space: nowrap; }
.props td.ind2 { padding-left: 40px; }
.props td.ind1 { padding-left: 21px; }
.props td.expand { padding-left: 2px; }
.props td.expand svg { display: inline-block; margin-right: 3px; vertical-align: 1px; }
.props td.pv { background: #e8e8e8; padding: 0; }
.n { display: inline-block; width: 120px; text-align: right; }
.u { margin-left: 10px; }
.chart-row td { height: 163px; }
.props td.chart-cell { vertical-align: top; padding-top: 4px; }
.chart { background: #fff; border: 1px solid #3a7ca5; margin-left: 25px; }
.chart text { font: 12px "Liberation Sans", Arial, sans-serif; fill: #222; }
.chart .end { text-anchor: end; }
.chart .mid { text-anchor: middle; }
.chart path { fill: none; }
.c-axis { stroke: #222; stroke-width: 1; }
.c-light { stroke: #aec7e8; stroke-width: 1.5; }
.c-blue { stroke: #1f77b4; stroke-width: 1.5; }
.c-orange { stroke: #ff7f0e; stroke-width: 1.5; }

.scrollbar { width: 17px; flex: none; margin-top: 41px; background: #f0f0f0; display: flex; flex-direction: column; align-items: center; padding: 8px 0 7px; }
.arrow { color: #555; }
.track { flex: 1; width: 100%; padding: 115px 2px 0; }
.thumb { height: 261px; background: #c0c0c0; }

.doc-tabs { height: 19px; display: flex; border-top: 1px solid #c8c8d4; background: #f0f0f4; font-size: 11.2px; }
.doc-tab { padding: 0 5px 0 6px; line-height: 18px; color: #444; width: 68px; white-space: nowrap; }
.doc-tab.current { width: 190px; padding-left: 4px; color: #1e78c8; background: #f5f5f8; border: 1px solid #c8c8d4; border-top: 0; }

/* Status */
.status { height: 20px; flex: none; background: #0078cc; color: #fff; display: flex; justify-content: flex-end; align-items: center; gap: 12px; padding-right: 8px; font-size: 11.2px; white-space: nowrap; }
.status span { display: flex; align-items: center; }
.st-msg svg { margin-right: 2px; }
.st-msg { margin-right: 6px; font-size: 11.4px; }
.st-sel { margin-right: 11px; }
.st-unit svg { margin-right: 6px; }
.unit-text { font-size: 11.7px; }
```
